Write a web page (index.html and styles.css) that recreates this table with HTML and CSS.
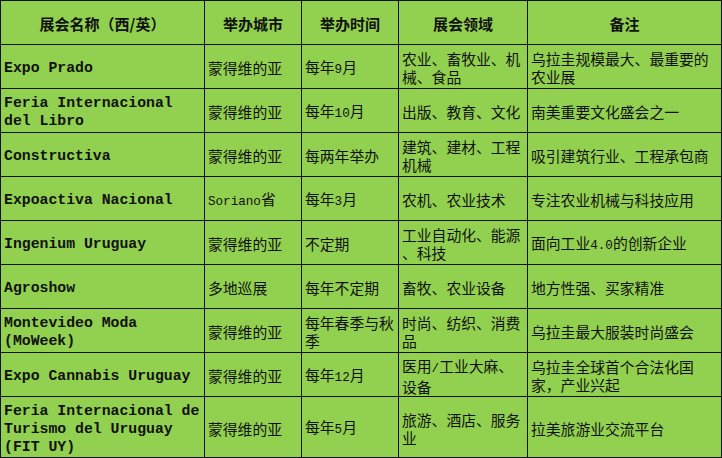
FILE: index.html
```html
<!DOCTYPE html>
<html lang="zh-CN">
<head>
<meta charset="utf-8">
<title>乌拉圭展会</title>
<link rel="stylesheet" href="styles.css">
</head>
<body>
<table class="expo">
  <colgroup>
    <col class="c1"><col class="c2"><col class="c3"><col class="c4"><col class="c5">
  </colgroup>
  <thead>
    <tr class="head">
      <th>展会名称（西/英）</th>
      <th>举办城市</th>
      <th>举办时间</th>
      <th>展会领域</th>
      <th>备注</th>
    </tr>
  </thead>
  <tbody>
    <tr>
      <td class="en">Expo Prado</td>
      <td>蒙得维的亚</td>
      <td>每年<span class="lat">9</span>月</td>
      <td>农业、畜牧业、机<br>械、食品</td>
      <td>乌拉圭规模最大、最重要的<br>农业展</td>
    </tr>
    <tr>
      <td class="en">Feria Internacional<br>del Libro</td>
      <td>蒙得维的亚</td>
      <td>每年<span class="lat">10</span>月</td>
      <td>出版、教育、文化</td>
      <td>南美重要文化盛会之一</td>
    </tr>
    <tr>
      <td class="en">Constructiva</td>
      <td>蒙得维的亚</td>
      <td>每两年举办</td>
      <td>建筑、建材、工程<br>机械</td>
      <td>吸引建筑行业、工程承包商</td>
    </tr>
    <tr>
      <td class="en">Expoactiva Nacional</td>
      <td><span class="lat">Soriano</span>省</td>
      <td>每年<span class="lat">3</span>月</td>
      <td>农机、农业技术</td>
      <td>专注农业机械与科技应用</td>
    </tr>
    <tr>
      <td class="en">Ingenium Uruguay</td>
      <td>蒙得维的亚</td>
      <td>不定期</td>
      <td>工业自动化、能源<br>、科技</td>
      <td>面向工业<span class="lat">4.0</span>的创新企业</td>
    </tr>
    <tr>
      <td class="en">Agroshow</td>
      <td>多地巡展</td>
      <td>每年不定期</td>
      <td>畜牧、农业设备</td>
      <td>地方性强、买家精准</td>
    </tr>
    <tr>
      <td class="en">Montevideo Moda<br>(MoWeek)</td>
      <td>蒙得维的亚</td>
      <td>每年春季与秋<br>季</td>
      <td>时尚、纺织、消费<br>品</td>
      <td>乌拉圭最大服装时尚盛会</td>
    </tr>
    <tr>
      <td class="en">Expo Cannabis Uruguay</td>
      <td>蒙得维的亚</td>
      <td>每年<span class="lat">12</span>月</td>
      <td>医用<span class="lat">/</span>工业大麻、<br>设备</td>
      <td>乌拉圭全球首个合法化国<br>家，产业兴起</td>
    </tr>
    <tr class="tall">
      <td class="en">Feria Internacional de<br>Turismo del Uruguay<br>(FIT UY)</td>
      <td>蒙得维的亚</td>
      <td>每年<span class="lat">5</span>月</td>
      <td>旅游、酒店、服务<br>业</td>
      <td>拉美旅游业交流平台</td>
    </tr>
  </tbody>
</table>
</body>
</html>
```

FILE: styles.css
```css
html, body {
  margin: 0;
  padding: 0;
  background: #ffffff;
}

.expo {
  border-collapse: collapse;
  table-layout: fixed;
  width: 721px;
  background: #92d050;
  font-family: "Noto Sans CJK SC", "Noto Sans", sans-serif;
  font-size: 14.8px;
  line-height: 18px;
  color: #111;
}

.c1 { width: 204px; }
.c2 { width: 97px; }
.c3 { width: 97px; }
.c4 { width: 129px; }
.c5 { width: 194px; }

.expo th,
.expo td {
  border: 1.5px solid #111;
  padding: 3px 3px 0 3px;
  height: 44px;
  box-sizing: border-box;
  vertical-align: middle;
  white-space: nowrap;
  overflow: hidden;
  text-align: left;
  font-weight: 400;
}

.expo th {
  text-align: center;
  font-weight: 700;
  font-size: 15px;
}

.expo .tall td {
  height: 61px;
}

.expo td.en {
  font-family: "Liberation Mono", "DejaVu Sans Mono", monospace;
  font-weight: 700;
  font-size: 14.8px;
  padding-left: 3px;
}

.lat {
  font-family: "Liberation Mono", "DejaVu Sans Mono", monospace;
  font-size: 12.6px;
}
```
